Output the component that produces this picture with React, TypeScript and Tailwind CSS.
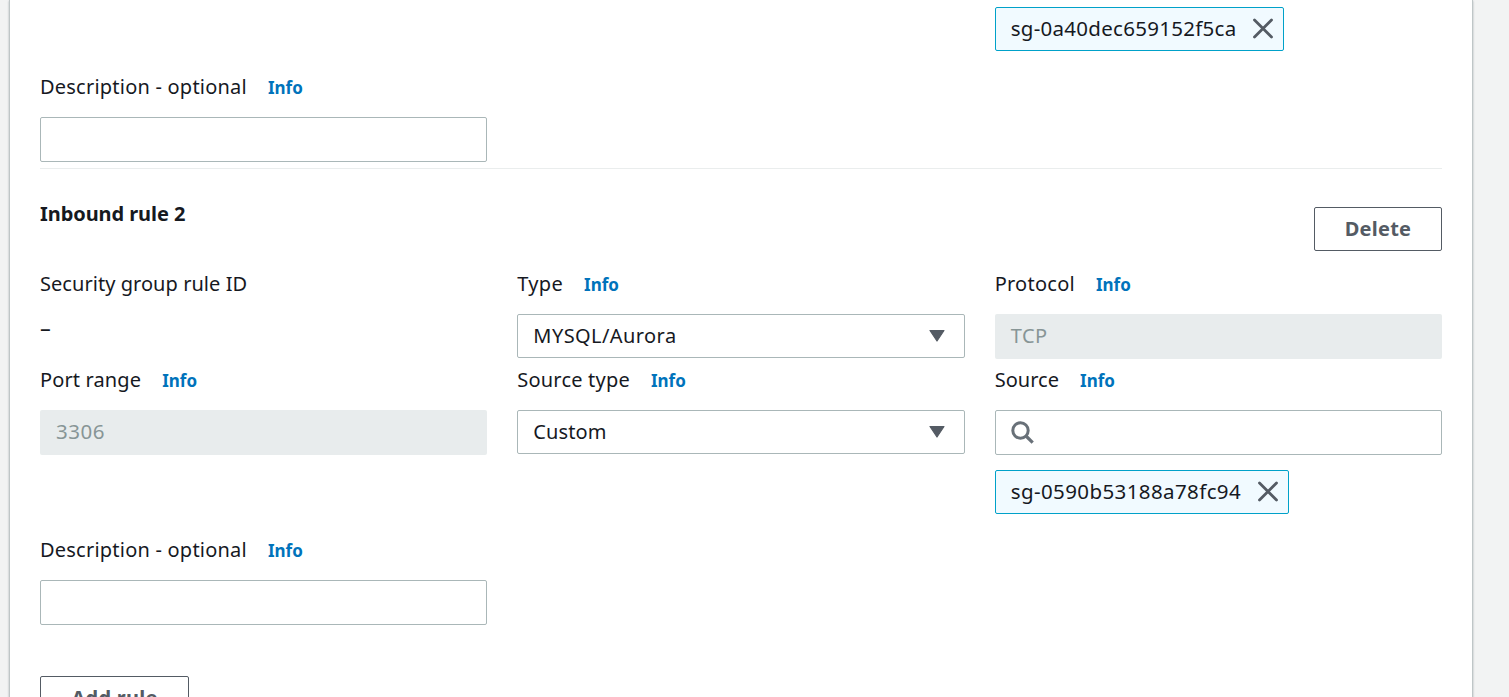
import type { ReactNode } from "react";

function Label({ children, info, className = "" }: { children: ReactNode; info?: boolean; className?: string }) {
  return (
    <div className="mb-[18px] flex h-[26px] items-baseline pt-px leading-[26px]">
      <span className={`whitespace-nowrap ${className}`}>{children}</span>
      {info && (
        <a href="#" className="ml-[21px] text-[17px] font-bold leading-[26px] text-[#0073bb]">
          Info
        </a>
      )}
    </div>
  );
}

function TextField() {
  return <input className="block h-[45px] w-full rounded-[2px] border border-[#aab7b8] bg-white px-4 outline-none" />;
}

function Disabled({ children, className = "" }: { children: ReactNode; className?: string }) {
  return (
    <div className="h-[45px] rounded-[2px] bg-[#e8eced] px-4 pt-[9px] leading-[26px] text-[#879596]">
      <span className={`block ${className}`}>{children}</span>
    </div>
  );
}

function Select({ children, className = "" }: { children: ReactNode; className?: string }) {
  return (
    <div className="flex h-11 items-start justify-between rounded-[2px] border border-[#aab7b8] bg-white pl-[15px] pr-[19px] pt-[8px] leading-[26px]">
      <span className={className}>{children}</span>
      <svg width="16" height="13" viewBox="0 0 16 13" className="mt-[6px]">
        <path d="M1 1.5H15L8 12Z" fill="#545b64" stroke="#545b64" strokeWidth="1.2" strokeLinejoin="round" />
      </svg>
    </div>
  );
}

function Token({ children, width, className = "" }: { children: ReactNode; width: string; className?: string }) {
  return (
    <div className={`flex h-11 items-start rounded-[2px] border border-[#00a1c9] bg-[#f1faff] pl-[15px] pt-[7px] text-[20.5px] leading-[26px] ${width}`}>
      <span className={`whitespace-nowrap ${className}`}>{children}</span>
      <svg width="22" height="22" viewBox="0 0 22 22" className="ml-auto mr-[9px] mt-[2px] shrink-0" stroke="#545b64" strokeWidth="2.8" strokeLinecap="round">
        <path d="M2.5 3L19.5 20M19.5 3L2.5 20" />
      </svg>
    </div>
  );
}

function Button({ children, width }: { children: ReactNode; width: string }) {
  return (
    <button className={`h-11 shrink-0 rounded-[2px] border border-[#545b64] bg-white pb-[1px] font-bold leading-[26px] tracking-[0.25px] text-[#545b64] ${width}`}>
      {children}
    </button>
  );
}

export default function App() {
  return (
    <div className="h-[697px] w-full overflow-hidden bg-[#f2f3f3] pl-[9px] font-['Noto_Sans',sans-serif] text-[20px] text-[#16191f]">
      <main className="h-[760px] w-[1464px] border-x border-[#bfc6c7] bg-white px-[30px] pt-[7px] shadow-[0_1px_2px_rgba(0,28,36,0.3)]">
        <section className="border-b border-[#eaeded] pb-[6px]">
          <div className="grid grid-cols-3 gap-x-[30px]">
            <div className="col-start-3">
              <Token width="w-[289px]" className="tracking-[0.28px]">sg-0a40dec659152f5ca</Token>
            </div>
            <div className="mt-[22px]">
              <Label info className="tracking-[0.22px]">Description - optional</Label>
              <TextField />
            </div>
          </div>
        </section>
        <section>
          <header className="flex h-[101px] items-start justify-between pt-[31px]">
            <h2 className="pt-px font-bold leading-[26px] tracking-[-0.07px]">Inbound rule 2</h2>
            <div className="mt-[7px]">
              <Button width="w-[128px]">Delete</Button>
            </div>
          </header>
          <div className="grid grid-cols-3 gap-x-[30px]">
            <div className="h-24">
              <Label className="tracking-[0.05px]">Security group rule ID</Label>
              <p className="pt-px text-[21.5px] leading-[26px]">–</p>
            </div>
            <div className="h-24">
              <Label info className="tracking-[0.3px]">Type</Label>
              <Select className="tracking-[0.42px]">MYSQL/Aurora</Select>
            </div>
            <div className="h-24">
              <Label info className="tracking-[0.25px]">Protocol</Label>
              <Disabled className="tracking-[0.5px]">TCP</Disabled>
            </div>
            <div>
              <Label info className="tracking-[0.13px]">Port range</Label>
              <Disabled className="-mt-px text-[20.5px] tracking-[0.5px]">3306</Disabled>
            </div>
            <div>
              <Label info className="tracking-[0.2px]">Source type</Label>
              <Select className="tracking-[0.08px]">Custom</Select>
            </div>
            <div>
              <Label info className="tracking-[0.03px]">Source</Label>
              <div className="flex h-[45px] items-center rounded-[2px] border border-[#aab7b8] bg-white px-[15px]">
                <svg width="24" height="24" viewBox="0 0 24 24" fill="none" stroke="#687078" strokeWidth="3">
                  <circle cx="9.5" cy="9.5" r="7.7" />
                  <path d="M15 15L21.7 21.7" strokeWidth="3.2" />
                </svg>
              </div>
              <div className="mt-[15px]">
                <Token width="w-[294px]" className="tracking-[0.4px]">sg-0590b53188a78fc94</Token>
              </div>
            </div>
            <div className="mt-[22px]">
              <Label info className="tracking-[0.22px]">Description - optional</Label>
              <TextField />
            </div>
          </div>
        </section>
        <div className="mt-[51px]">
          <Button width="w-[149px]">Add rule</Button>
        </div>
      </main>
    </div>
  );
}
